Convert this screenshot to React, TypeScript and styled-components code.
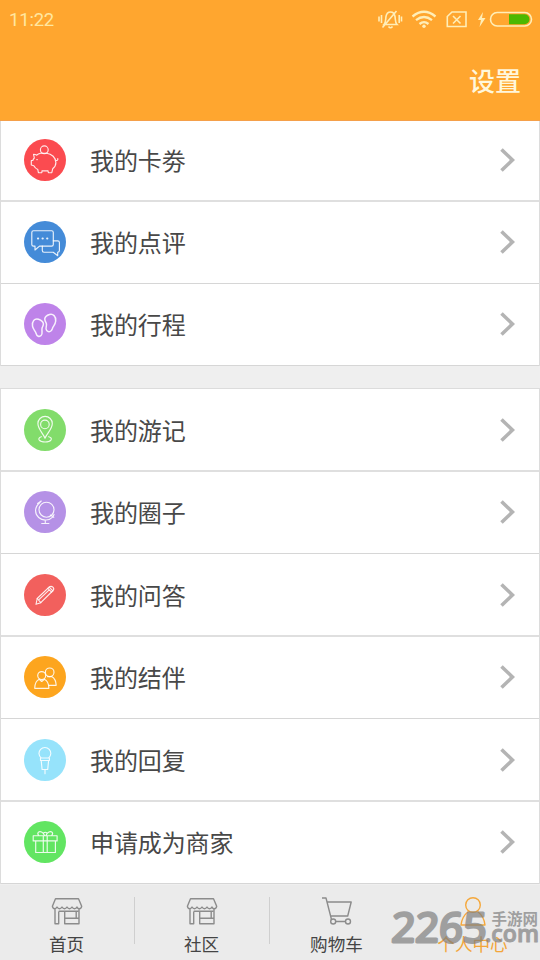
import React from "react";
import styled, { createGlobalStyle } from "styled-components";

const GlobalStyle = createGlobalStyle`
  * { box-sizing: border-box; }
  body {
    margin: 0;
    background: #efefef;
    font-family: "Noto Sans CJK SC", sans-serif;
    color: #484848;
  }
`;

const Screen = styled.div`
  position: relative;
  display: flex;
  flex-direction: column;
  width: 540px;
  height: 960px;
  overflow: hidden;
  background: #efefef;
`;

const Header = styled.header`
  flex: none;
  height: 121px;
  background: #ffa62f;
  border-bottom: 1px solid #f5a04a;
`;

const StatusBar = styled.div`
  display: flex;
  align-items: center;
  justify-content: space-between;
  height: 40px;
  padding: 0 7px 0 9px;
`;

const Clock = styled.span`
  font: 400 18.5px/40px Roboto, sans-serif;
  letter-spacing: -0.2px;
  color: #ffe6a0;
`;

const TitleBar = styled.div`
  display: flex;
  align-items: center;
  justify-content: flex-end;
  height: 80px;
  padding-right: 19px;
`;

const SettingsButton = styled.button`
  border: 0;
  padding: 0;
  background: none;
  font: 500 26px/40px "Noto Sans CJK SC", sans-serif;
  color: #fff7dc;
`;

const Content = styled.main`
  display: flex;
  flex-direction: column;
  gap: 22px;
  height: 764px;
  flex: none;
  overflow: hidden;
`;

const Group = styled.section<{ $scrolled?: boolean }>`
  flex: none;
  margin-top: ${(p) => (p.$scrolled ? "-2px" : "0")};
  background: #fff;
  border: 1px solid #dcdcdc;
  border-width: ${(p) => (p.$scrolled ? "0 1px" : "1px 1px 0")};
`;

const Row = styled.div<{ $thick?: boolean }>`
  display: flex;
  align-items: center;
  height: ${(p) => (p.$thick ? 83 : 82)}px;
  padding: 0 24px ${(p) => (p.$thick ? 0 : 1)}px 23px;
  border-bottom: ${(p) => (p.$thick ? "2px solid #dfdfdf" : "1px solid #d6d6d6")};
`;

const Badge = styled.svg<{ $color: string }>`
  flex: none;
  width: 42px;
  height: 42px;
  border-radius: 50%;
  background: ${(p) => p.$color};
  fill: none;
  stroke: #fff;
  stroke-opacity: 0.88;
  stroke-width: 1.15;
  stroke-linecap: round;
  stroke-linejoin: round;
`;

const Label = styled.span`
  flex: 1;
  margin-left: 24px;
  font-size: 24px;
  line-height: 36px;
  letter-spacing: -0.1px;
`;

const Chevron = styled.svg`
  width: 15px;
  height: 24px;
  fill: none;
  stroke: #b4b4b4;
  stroke-width: 3.6;
`;

const Nav = styled.nav`
  display: grid;
  grid-template-columns: repeat(4, 1fr);
  height: 75px;
  flex: none;
  background: #ebebeb;
`;

const Tab = styled.a<{ $active?: boolean }>`
  position: relative;
  display: flex;
  flex-direction: column;
  align-items: center;
  padding: 11px ${(p) => (p.$active ? 0 : 2)}px 0 0;
  font-size: 17.6px;
  line-height: 26px;
  color: ${(p) => (p.$active ? "#f3a63a" : "#444")};

  & + &::before {
    content: "";
    position: absolute;
    left: -1px;
    top: 12px;
    width: 1px;
    height: 47px;
    background: #cfcfcf;
  }
`;

const TabIcon = styled.svg<{ $active?: boolean }>`
  width: 34px;
  height: 32px;
  margin-bottom: 3px;
  fill: none;
  stroke: ${(p) => (p.$active ? "#f5a83c" : "#8c8c8c")};
  stroke-width: 1.4;
  stroke-linejoin: round;
`;

const Watermark = styled.svg`
  position: absolute;
  right: 0;
  bottom: 10px;
  width: 152px;
  height: 46px;
  fill: #7c7c7c;
  stroke: #7c7c7c;
  stroke-linejoin: round;
  opacity: 0.68;
`;

const glyphs = {
  piggy: (
    <>
      <circle cx="20.3" cy="10.8" r="3.9" />
      <path d="M16.500 14.200c-1.600.4-2.800 1-4 2-.8-.8-1.700-1-3-1l.8 3.800c-.8.9-1.200 1.700-1.500 2.500H7.300V26l2.500.7c.9 1.700 2.200 2.900 4 3.800l.6 3.200h3.400l.3-2c1.700.3 4 .3 5.800 0l.5 2h3.400l.9-3.900c2.200-1.700 3.200-3.700 3.200-6.300 0-4.700-4.200-8.800-9.300-9.300M16.500 14.200h6.100M31.600 21.500c1.700.2 2.500-.6 2.200-2M12.800 20.600h.5" />
    </>
  ),
  chat: (
    <>
      <path d="M9.500 9.700h18.100q1.700 0 1.700 1.700v12q0 1.700-1.700 1.700H15.500L11 29v-3.900H9.500q-1.700 0-1.700-1.700v-12q0-1.700 1.700-1.700z" />
      <path d="M29.300 19.800h4.400q1.700 0 1.700 1.600v8.200q0 1.600-1.700 1.600v3.500l-4.500-3.500h-9.200q-1.700 0-1.700-1.600v-4.500" />
      <path strokeWidth="2.200" d="M14 17.500h.1M18.600 17.500h.1M23.200 17.500h.1" />
    </>
  ),
  feet: (
    <g strokeWidth="1.500">
      <path d="M14.500 16.200c-4-1.300-6.800 2.300-6 7 .6 3.600 2.800 4.300 3.600 7.300.7 2.800 3.200 3.700 5 2 2.100-2 .2-4.300 1-7.500.4-1.500 1.500-2.500 1.300-4.300-.2-2-2.200-3.600-4.900-4.500z" />
      <path d="M25.500 11.500c3.600-1.100 6.600 1.900 6.200 6.500-.4 4.200-2.700 4.800-3.500 8-.8 2.900-3.800 3.600-5.500 1.600-2-2.400.6-4.200-.4-7.300-.6-1.700-1.800-2.700-1.500-4.700.3-2 2-3.300 4.700-4.100z" />
    </g>
  ),
  pin: (
    <>
      <path d="M21 29.200c-1.800-4.800-7.100-8.900-7.100-14.600a7.200 7.200 0 0 1 14.400 0c0 5.700-5.400 9.800-7.300 14.600z" />
      <circle cx="20.900" cy="15.400" r="4.300" />
      <path d="M17.300 27.700c-2.300.8-3 2.200-2 3.500 2 2.400 9.700 2.400 11.600 0 1.100-1.400.2-2.900-2.200-3.500" />
    </>
  ),
  globe: (
    <>
      <circle cx="22.500" cy="18.700" r="7.500" />
      <path d="m17.200 10-1.500 1.700c-5.200 4.200-5.400 10.800-1 14.800 4.500 4 10.500 3 14.300-.7l1-2.200M13.600 12.500l3.600-2.500M26.400 24l3.400 2.300M21.300 29.300v3M17.700 32.500h7.200" />
    </>
  ),
  pencil: (
    <>
      <path d="m12 30.300 1.200-5.800L25.600 12.700q1.700-1 3.300.5t.2 3.300L16.800 28.700z" />
      <path d="m13.200 24.500 3.600 4.200M23.800 14.400l3.800 3.700M25.200 13.100l3.600 3.700M15.200 25.400l10-9.600" />
    </>
  ),
  people: (
    <>
      <circle cx="25.700" cy="16.300" r="4.300" />
      <path d="M23.500 20.600h4.200c2.600 1.500 4.300 4.500 4.500 8.700h-7.400" />
      <circle cx="17.700" cy="19.600" r="4" />
      <path d="M15.200 23.300c-2.700 1.300-4.400 4.700-4.500 9h14.200c-.1-4.500-1.800-7.700-4.500-9l-2.700 2.200z" />
    </>
  ),
  mic: (
    <path d="M17.200 19a5.900 5.900 0 1 1 7.400 0M16.500 19h8.900v2.500h-8.900zM17.200 21.500l.9 9h5.600l.9-9M21 30.500v4.200" />
  ),
  gift: (
    <path d="M9.200 14.700h23.900v5.200H9.200zM11.700 19.900h19.700v11.600H11.700zM19.300 14.700v16.800M23.200 14.700v16.800M20.500 14.500c-1.200-3.500-4.500-4.700-6-3.300-1.300 1.200-.6 2.500.3 3.500M22 14.500c1.200-3.500 4.500-4.700 6-3.300 1.200 1.200.5 2.500-.4 3.500M19.500 12q1.800-1.500 3.500 0" />
  ),
};

type Item = { text: string; color: string; icon: keyof typeof glyphs; thick?: boolean };

const assets: Item[] = [
  { text: "我的卡劵", color: "#fb4b50", icon: "piggy", thick: true },
  { text: "我的点评", color: "#448bd8", icon: "chat" },
  { text: "我的行程", color: "#be83e9", icon: "feet" },
];

const activity: Item[] = [
  { text: "我的游记", color: "#82dc6b", icon: "pin", thick: true },
  { text: "我的圈子", color: "#b591e6", icon: "globe" },
  { text: "我的问答", color: "#f2605d", icon: "pencil", thick: true },
  { text: "我的结伴", color: "#fda51e", icon: "people" },
  { text: "我的回复", color: "#96e3fb", icon: "mic", thick: true },
  { text: "申请成为商家", color: "#62e562", icon: "gift" },
];

const MenuRow = ({ item }: { item: Item }) => (
  <Row $thick={item.thick}>
    <Badge $color={item.color} viewBox="0 0 42 42">
      {glyphs[item.icon]}
    </Badge>
    <Label>{item.text}</Label>
    <Chevron viewBox="0 0 15 24">
      <path d="m1.500 1.500 11 10.500-11 10.500" />
    </Chevron>
  </Row>
);

const StatusIcons = () => (
  <svg width="156" height="24" viewBox="0 1 156 24" fill="none" stroke="#ffeeb8" strokeWidth="1.600">
    <path d="M7 17.500c2-2 1.500-5 2-8 .5-3 2-4.500 4.500-4.500S17.500 6.500 18 9.500c.5 3 0 6 2 8zM11.500 19.500q2 2.500 4 0M5.500 20.500 19.500 4M4.500 8v8M2 9.500v5M22.200 8v8M24.500 9.500v5" />
    <g strokeWidth="2.300">
      <path d="M35.500 9.500q11.500-9.500 23 0M39 13.200q8-6.300 16 0M42.500 17q4.500-3.800 9 0" />
    </g>
    <circle cx="47" cy="19.300" r="1.700" fill="#ffeeb8" stroke="none" />
    <path d="M75 5h14v14.500H70.300V9.500zM76 9l7.500 7.500M83.500 9 76 16.500" />
    <path d="m106 5-5 8h3l-1.500 7 6-9h-3.500z" fill="#ffeeb8" stroke="none" />
    <rect x="113.500" y="5.500" width="41" height="13.500" rx="6.700" />
    <path d="M132 7.200h15.500a5 5 0 0 1 0 10H132z" fill="#4db800" stroke="none" />
  </svg>
);

const Store = () => (
  <TabIcon viewBox="0 0 34 32">
    <path d="M5.500 2.700h23l3.200 7.500q-.3 2.500-2.300 2.500-1.800 0-2.400-1.700-.9 1.700-2.500 1.700T22 11q-1 1.700-2.500 1.700T17 11q-1 1.700-2.500 1.700T12 11q-1 1.700-2.500 1.700T7 11q-.8 1.700-2.300 1.700-2 0-2.300-2.500zM5 13v14.700h3.700V15.500M8.700 15.200h19.500M29 13v14.700H14.700V15.500M14.700 22.200h11.500V15.500M26.200 22.200H29" />
  </TabIcon>
);

const Cart = () => (
  <TabIcon viewBox="0 0 34 32">
    <path d="M2 2h4l6 23.500h16M7.200 6h24l-3.500 14H10.800" />
    <circle cx="13.200" cy="25.500" r="2.500" fill="#ebebeb" />
    <circle cx="28" cy="25.500" r="2.500" fill="#ebebeb" />
  </TabIcon>
);

const Person = () => (
  <TabIcon $active viewBox="0 0 34 32">
    <circle cx="17" cy="9" r="7.300" />
    <path d="M12.500 15.500c-4 3-6.800 7.500-7.500 13.500h24c-.7-6-3.500-10.500-7.500-13.500" />
  </TabIcon>
);

export default function App() {
  return (
    <Screen>
      <GlobalStyle />
      <Header>
        <StatusBar>
          <Clock>11:22</Clock>
          <StatusIcons />
        </StatusBar>
        <TitleBar>
          <SettingsButton>设置</SettingsButton>
        </TitleBar>
      </Header>
      <Content>
        <Group $scrolled>
          {assets.map((item) => (
            <MenuRow key={item.text} item={item} />
          ))}
        </Group>
        <Group>
          {activity.map((item) => (
            <MenuRow key={item.text} item={item} />
          ))}
        </Group>
      </Content>
      <Nav>
        <Tab><Store />首页</Tab>
        <Tab><Store />社区</Tab>
        <Tab><Cart />购物车</Tab>
        <Tab $active><Person />个人中心</Tab>
      </Nav>
      <Watermark viewBox="0 0 152 46">
        <g fontFamily="Open Sans, sans-serif">
          <text x="3" y="37.500" transform="skewX(-3) translate(2 0)" fontWeight="400" fontSize="40.500" strokeWidth="3" textLength="95" lengthAdjust="spacingAndGlyphs">2265</text>
          <text x="97" y="37.500" fontWeight="600" fontSize="23.500" strokeWidth="1" textLength="54" lengthAdjust="spacingAndGlyphs">.com</text>
        </g>
        <text x="103.500" y="20.500" fontFamily="Noto Sans CJK SC, sans-serif" fontWeight="700" fontSize="15.500" stroke="none">手游网</text>
      </Watermark>
    </Screen>
  );
}
